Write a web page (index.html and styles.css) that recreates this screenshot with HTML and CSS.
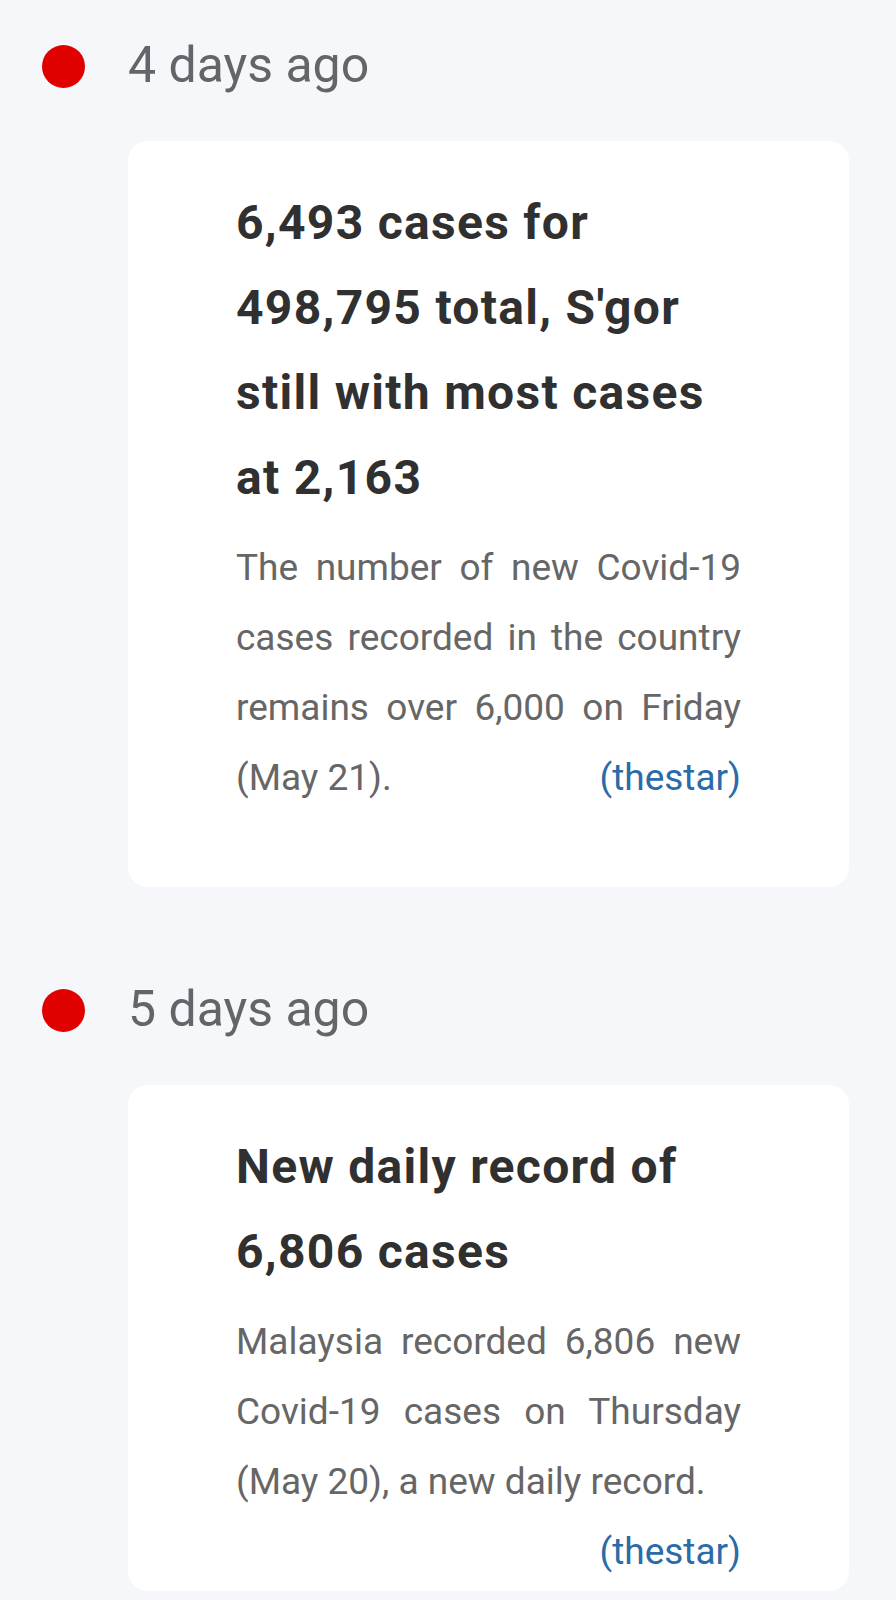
FILE: index.html
```html
<!DOCTYPE html>
<html lang="en">
<head>
<meta charset="utf-8">
<title>Timeline</title>
<link rel="stylesheet" href="styles.css">
</head>
<body>
<main class="timeline">
  <section class="entry">
    <div class="when">
      <span class="dot"></span>
      <span class="ago">4 days ago</span>
    </div>
    <article class="card">
      <h2 class="title">6,493 cases for 498,795 total, S'gor still with most cases at 2,163</h2>
      <p class="summary">The number of new Covid-19 cases recorded in the country remains over 6,000 on Friday (May 21). <a class="src" href="#">(thestar)</a></p>
    </article>
  </section>
  <section class="entry">
    <div class="when">
      <span class="dot"></span>
      <span class="ago">5 days ago</span>
    </div>
    <article class="card">
      <h2 class="title">New daily record of 6,806 cases</h2>
      <p class="summary">Malaysia recorded 6,806 new Covid-19 cases on Thursday (May 20), a new daily record. <a class="src" href="#">(thestar)</a></p>
    </article>
  </section>
</main>
</body>
</html>
```

FILE: styles.css
```css
html, body {
  margin: 0;
  padding: 0;
  background: #f6f7fb;
}
body {
  font-family: Roboto, "Noto Sans", "Liberation Sans", sans-serif;
}
.timeline {
  padding: 45px 47px 0 42px;
}
.entry + .entry {
  margin-top: 102px;
}
.when {
  display: flex;
  align-items: center;
  height: 42px;
  gap: 43px;
}
.dot {
  flex: none;
  width: 43px;
  height: 43px;
  border-radius: 50%;
  background: #e00000;
}
.ago {
  font-size: 50px;
  line-height: 42px;
  color: #636569;
  margin-bottom: 2px;
}
.card {
  margin: 54px 0 0 86px;
  background: #ffffff;
  border-radius: 20px;
  padding: 39px 108px 74px 108px;
}
.title {
  margin: 0 0 13px;
  font-size: 48px;
  font-weight: 700;
  line-height: 85px;
  letter-spacing: 1.3px;
  color: #303030;
}
.summary {
  margin: 0;
  font-size: 37px;
  line-height: 70px;
  color: #666666;
  text-align: justify;
}
.src {
  float: right;
  color: #2a6ba8;
  text-decoration: none;
}
```
